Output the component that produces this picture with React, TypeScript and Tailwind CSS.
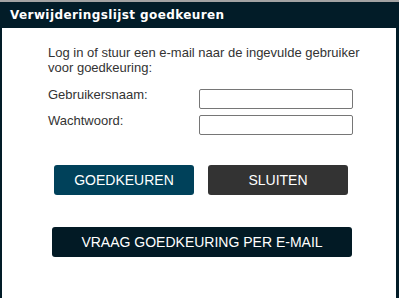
export default function App() {
  return (
    <div className="flex h-[298px] w-[399px] flex-col border-t-2 border-[#a3a3a3] bg-[#021c28] font-['Liberation_Sans',Arial,sans-serif]">
      <div className="flex h-[26px] shrink-0 items-center pl-[10px] font-['DejaVu_Sans',Verdana,sans-serif] text-[12px] font-bold tracking-[0.4px] text-white">
        Verwijderingslijst goedkeuren
      </div>
      <div className="ml-[2px] mr-[3px] flex-1 bg-white pl-[46px] pt-[17px] text-[13px] leading-[15px] text-[#333]">
        <p>
          Log in of stuur een e-mail naar de ingevulde gebruiker
          <br />
          voor goedkeuring:
        </p>

        <div className="mt-[12px] flex flex-col gap-[4px]">
          <div className="flex items-start">
            <label className="w-[151px]">Gebruikersnaam:</label>
            <input
              type="text"
              className="mt-[2px] h-[20px] w-[154px] rounded-[2px] border border-[#767676] bg-white"
            />
          </div>
          <div className="flex items-start">
            <label className="w-[151px]">Wachtwoord:</label>
            <input
              type="password"
              className="mt-[2px] h-[20px] w-[154px] rounded-[2px] border border-[#767676] bg-white"
            />
          </div>
        </div>

        <div className="mt-[30px] flex gap-[14px] pl-[6px]">
          <button
            type="button"
            className="h-[30px] w-[140px] rounded-[3px] bg-[#00415a] text-[14px] text-white"
          >
            GOEDKEUREN
          </button>
          <button
            type="button"
            className="h-[30px] w-[140px] rounded-[3px] bg-[#333333] text-[14px] text-white"
          >
            SLUITEN
          </button>
        </div>

        <button
          type="button"
          className="mt-[32px] ml-[4px] h-[30px] w-[300px] rounded-[3px] bg-[#021a25] text-[14px] text-white"
        >
          VRAAG GOEDKEURING PER E-MAIL
        </button>
      </div>
    </div>
  );
}
